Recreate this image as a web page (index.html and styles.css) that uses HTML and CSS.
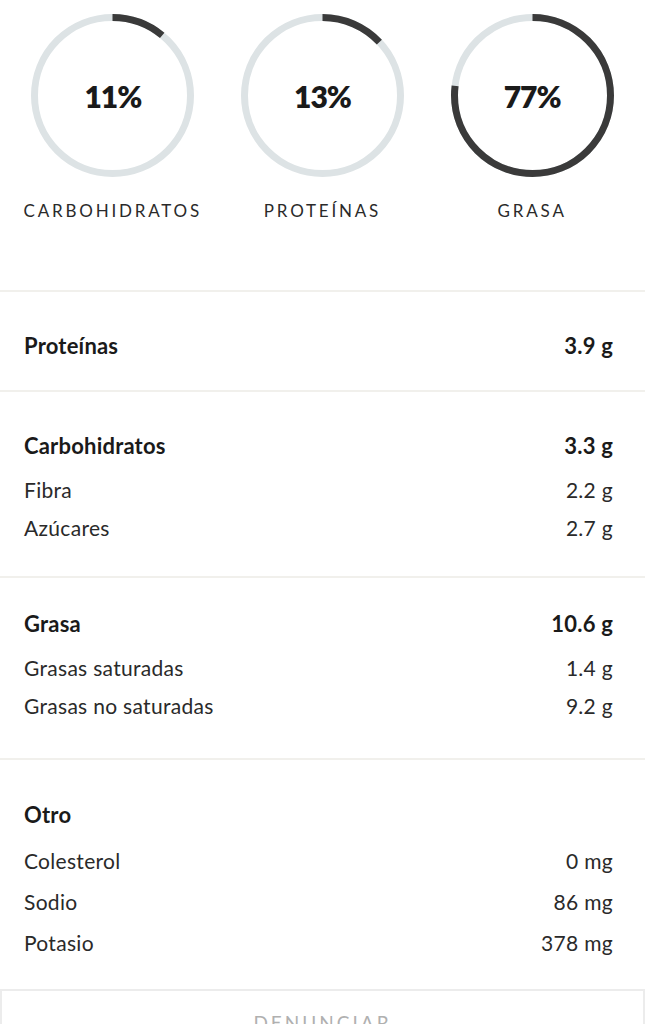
FILE: index.html
```html
<!DOCTYPE html>
<html>
<head>
  <title>Nutrición</title>
  <link rel="stylesheet" href="styles.css">
</head>
<body>
  <div class="macros">
    <div class="macro">
      <div class="ring">
        <svg viewBox="0 0 163 163" width="163" height="163">
          <circle class="track" cx="81.5" cy="81.5" r="78" />
          <circle class="bar" cx="81.5" cy="81.5" r="78" pathLength="100" stroke-dasharray="11 100" />
        </svg>
        <span class="pct">11%</span>
      </div>
      <div class="macro-label">CARBOHIDRATOS</div>
    </div>
    <div class="macro">
      <div class="ring">
        <svg viewBox="0 0 163 163" width="163" height="163">
          <circle class="track" cx="81.5" cy="81.5" r="78" />
          <circle class="bar" cx="81.5" cy="81.5" r="78" pathLength="100" stroke-dasharray="13 100" />
        </svg>
        <span class="pct">13%</span>
      </div>
      <div class="macro-label">PROTEÍNAS</div>
    </div>
    <div class="macro">
      <div class="ring">
        <svg viewBox="0 0 163 163" width="163" height="163">
          <circle class="track" cx="81.5" cy="81.5" r="78" />
          <circle class="bar" cx="81.5" cy="81.5" r="78" pathLength="100" stroke-dasharray="77 100" />
        </svg>
        <span class="pct">77%</span>
      </div>
      <div class="macro-label">GRASA</div>
    </div>
  </div>

  <div class="section">
    <div class="row head"><span>Proteínas</span><span>3.9 g</span></div>
  </div>

  <div class="section">
    <div class="row head"><span>Carbohidratos</span><span>3.3 g</span></div>
    <div class="row"><span>Fibra</span><span>2.2 g</span></div>
    <div class="row"><span>Azúcares</span><span>2.7 g</span></div>
  </div>

  <div class="section fat">
    <div class="row head"><span>Grasa</span><span>10.6 g</span></div>
    <div class="row"><span>Grasas saturadas</span><span>1.4 g</span></div>
    <div class="row"><span>Grasas no saturadas</span><span>9.2 g</span></div>
  </div>

  <div class="section last">
    <div class="row head"><span>Otro</span></div>
    <div class="row"><span>Colesterol</span><span>0 mg</span></div>
    <div class="row"><span>Sodio</span><span>86 mg</span></div>
    <div class="row"><span>Potasio</span><span>378 mg</span></div>
  </div>

  <button class="report">DENUNCIAR</button>
</body>
</html>
```

FILE: styles.css
```css
body {
  margin: 0;
  font-family: Lato, "Open Sans", sans-serif;
  color: #1c1c1c;
  background: #fff;
}
.macros {
  display: grid;
  grid-template-columns: repeat(3, 1fr);
  padding: 14px 8px 0;
  height: 276px;
  border-bottom: 2px solid #f1f0ec;
}
.macro {
  display: flex;
  flex-direction: column;
  align-items: center;
}
.ring {
  position: relative;
  width: 163px;
  height: 163px;
}
.ring svg {
  transform: rotate(-90deg);
}
.track,
.bar {
  fill: none;
  stroke-width: 7;
}
.track {
  stroke: #dde3e5;
}
.bar {
  stroke: #3a3a3a;
}
.pct {
  position: absolute;
  inset: 0;
  display: flex;
  align-items: center;
  justify-content: center;
  font-size: 30px;
  font-weight: 800;
  letter-spacing: -1px;
  color: #1a1a1a;
}
.macro-label {
  margin-top: 23px;
  font-size: 17px;
  letter-spacing: 2.8px;
  color: #2a2a2a;
}
.section {
  padding: 39px 32px 29px 24px;
  border-bottom: 2px solid #f1f0ec;
}
.section.fat {
  padding-top: 31px;
  padding-bottom: 33px;
}
.row {
  display: flex;
  justify-content: space-between;
  font-size: 21px;
  line-height: 38px;
  letter-spacing: 0.3px;
  color: #2a2a2a;
}
.row.head {
  font-weight: 700;
  font-size: 22px;
  line-height: 30px;
  letter-spacing: 0.2px;
  color: #1a1a1a;
  margin-bottom: 10px;
}
.section .row.head:only-child {
  margin-bottom: 0;
}
.section.last {
  padding-top: 40px;
  padding-bottom: 20px;
  border-bottom: none;
}
.section.last .row {
  line-height: 41px;
}
.section.last .row.head {
  line-height: 30px;
  margin-bottom: 10px;
}
.report {
  display: block;
  width: 100%;
  margin-top: 6px;
  padding: 20px 0;
  background: #fff;
  border: 2px solid #ececec;
  font-family: Lato, sans-serif;
  font-size: 19px;
  letter-spacing: 3px;
  color: #b0b0b0;
}
```
